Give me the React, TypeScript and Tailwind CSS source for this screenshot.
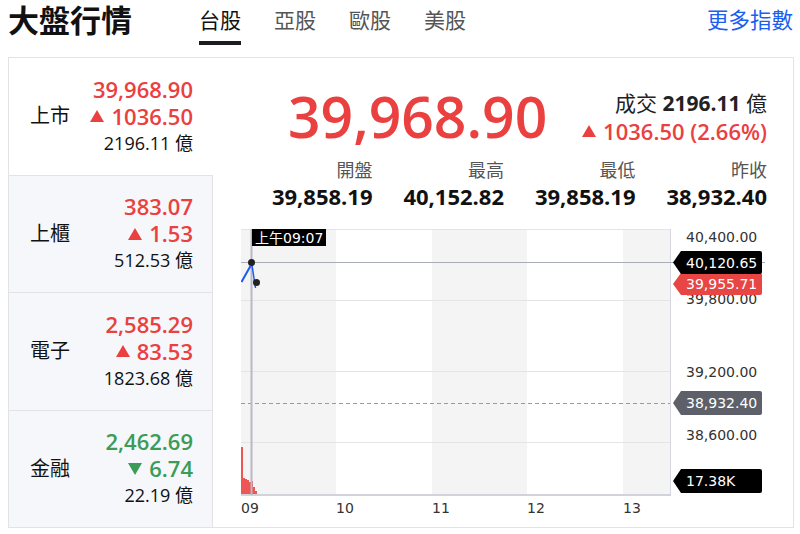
import React from "react"

const FONT = "'Open Sans', 'Noto Sans CJK TC', sans-serif"
const CHART_FONT = "'DejaVu Sans', 'Noto Sans CJK TC', sans-serif"

const rows = [
    { name: "上市", price: "39,968.90", chg: "1036.50", vol: "2196.11", up: true, active: true },
    { name: "上櫃", price: "383.07", chg: "1.53", vol: "512.53", up: true },
    { name: "電子", price: "2,585.29", chg: "83.53", vol: "1823.68", up: true },
    { name: "金融", price: "2,462.69", chg: "6.74", vol: "22.19", up: false },
]

const stats = [
    { label: "開盤", value: "39,858.19" },
    { label: "最高", value: "40,152.82" },
    { label: "最低", value: "39,858.19" },
    { label: "昨收", value: "38,932.40" },
]

const Tri = ({ up }: { up: boolean }) => (
    <svg width="14" height="12" viewBox="0 0 14 12" className="mr-[7px]">
        {up ? <path d="M7 0L14 12H0Z" fill="#eb4040" /> : <path d="M0 0H14L7 12Z" fill="#3b9b57" />}
    </svg>
)

const tag = (t: number, b: number) => {
    const cy = (t + b) / 2
    return `M673 ${cy}L681 ${t}H760Q762 ${t} 762 ${t + 2}V${b - 2}Q762 ${b} 760 ${b}H681Z`
}

const bars = [
    [241, 447], [243, 478], [245, 479], [247, 480], [249, 482], [251, 481], [253, 487], [255, 491],
]

const Chart = () => (
    <svg width="526" height="300" className="mt-[13px]" style={{ fontFamily: CHART_FONT }}>
        <g transform="translate(-241,-222)">
            <rect x="241" y="229" width="95" height="266" fill="#f4f4f4" />
            <rect x="432" y="229" width="95" height="266" fill="#f4f4f4" />
            <rect x="623" y="229" width="47" height="266" fill="#f4f4f4" />
            {[229.5, 300.5, 371.5, 442.5].map((y) => (
                <line key={y} x1="241" x2="670" y1={y} y2={y} stroke="#e4e4e4" />
            ))}
            <line x1="670.5" x2="670.5" y1="229" y2="495" stroke="#d5d8de" />
            <line x1="241" x2="670" y1="403.5" y2="403.5" stroke="#9a9a9a" strokeDasharray="4 3" />
            {bars.map(([x, y]) => (
                <rect key={x} x={x} y={y} width="2" height={495 - y} fill="#ee5555" />
            ))}
            <line x1="241" x2="671" y1="495" y2="495" stroke="#d0d3da" strokeWidth="2" />
            <line x1="251.5" x2="251.5" y1="229" y2="495" stroke="#b6bac4" strokeWidth="2" />
            <line x1="241" x2="765" y1="262.5" y2="262.5" stroke="#a9adb8" />
            <path d="M241.5 282L250.5 266" stroke="#1b5cf0" strokeWidth="2" fill="none" />
            <path d="M251.5 262L255.5 288" stroke="#1b5cf0" strokeWidth="1.5" fill="none" />
            <circle cx="251.5" cy="262.5" r="3.5" fill="#222" />
            <circle cx="256.5" cy="282.5" r="3.5" fill="#222" />
            <rect x="252" y="229" width="74" height="17" fill="#000" />
            <text x="255" y="238" fill="#fff" fontSize="14" dominantBaseline="central">上午09:07</text>

            {[
                ["40,400.00", 237],
                ["39,800.00", 299],
                ["39,200.00", 372],
                ["38,600.00", 435],
            ].map(([t, y]) => (
                <text key={t} x="686" y={y} fill="#333" fontSize="14" dominantBaseline="central">{t}</text>
            ))}

            <path d={tag(273, 295)} fill="#e84545" />
            <text x="686" y="284" fill="#fff" fontSize="14" dominantBaseline="central">39,955.71</text>
            <path d={tag(251, 274)} fill="#000" />
            <text x="686" y="262.5" fill="#fff" fontSize="14" dominantBaseline="central">40,120.65</text>
            <path d={tag(391, 415)} fill="#5d6068" />
            <text x="686" y="403" fill="#fff" fontSize="14" dominantBaseline="central">38,932.40</text>
            <path d={tag(469, 493)} fill="#000" />
            <text x="686" y="481" fill="#fff" fontSize="14" dominantBaseline="central">17.38K</text>

            {[
                ["09", 241],
                ["10", 336],
                ["11", 432],
                ["12", 527],
                ["13", 623],
            ].map(([t, x]) => (
                <text key={t} x={x} y="508" fill="#333" fontSize="14" dominantBaseline="central">{t}</text>
            ))}
        </g>
    </svg>
)

export default function App() {
    return (
        <div className="w-[800px] h-[534px] bg-white text-[#111] overflow-hidden" style={{ fontFamily: FONT }}>
            <header className="h-[57px] flex items-start pl-[8px] pr-[7px]">
                <h1 className="shrink-0 text-[31px] font-bold leading-[40px]">大盤行情</h1>
                <nav className="flex gap-[33px] ml-[67px]">
                    <div className="flex flex-col">
                        <span className="text-[21px] leading-[40px] text-[#111]">台股</span>
                        <span className="mt-[1px] h-[4px] bg-[#1b1c1f]" />
                    </div>
                    <span className="text-[21px] leading-[40px] text-[#555]">亞股</span>
                    <span className="text-[21px] leading-[40px] text-[#555]">歐股</span>
                    <span className="text-[21px] leading-[40px] text-[#555]">美股</span>
                </nav>
                <a className="ml-auto text-[21.5px] leading-[40px] text-[#1b5ef0]">更多指數</a>
            </header>

            <div className="ml-[8px] w-[786px] h-[471px] border border-[#e3e3e3] flex">
                <aside className="w-[204px] flex flex-col">
                    {rows.map((r) => (
                        <div
                            key={r.name}
                            className={
                                r.active
                                    ? "flex-1 flex items-center justify-between pl-[21px] pr-[20px] bg-white"
                                    : "flex-1 flex items-center justify-between pl-[21px] pr-[19px] bg-[#f5f7fa] border-t border-r border-[#e3e3e3]"
                            }
                        >
                            <span className="text-[20px]">{r.name}</span>
                            <div className="flex flex-col items-end">
                                <span className={"text-[22px] font-semibold leading-[27px] " + (r.up ? "text-[#eb4040]" : "text-[#3b9b57]")}>{r.price}</span>
                                <span className={"flex items-center text-[22px] font-semibold leading-[27px] " + (r.up ? "text-[#eb4040]" : "text-[#3b9b57]")}>
                                    <Tri up={r.up} />
                                    {r.chg}
                                </span>
                                <span className="text-[18px] leading-[27px]">{r.vol} 億</span>
                            </div>
                        </div>
                    ))}
                </aside>

                <main className="flex-1 flex flex-col pl-[28px] pr-[26px]">
                    <div className="h-[99px] pt-[18px] flex items-center">
                        <span className="ml-[47px] text-[57px] font-semibold text-[#eb4040] leading-none">39,968.90</span>
                        <div className="ml-auto flex flex-col items-end">
                            <span className="text-[21px] leading-[28px] text-[#222]">
                                成交 <span className="font-bold">2196.11</span> 億
                            </span>
                            <span className="flex items-center text-[22px] leading-[28px] font-semibold text-[#eb4040]">
                                <Tri up />
                                1036.50 (2.66%)
                            </span>
                        </div>
                    </div>
                    <div className="grid grid-cols-4 text-right">
                        {stats.map((s) => (
                            <div key={s.label} className="flex flex-col">
                                <span className="text-[18px] leading-[26px] text-[#555]">{s.label}</span>
                                <span className="text-[22px] leading-[26px] font-bold">{s.value}</span>
                            </div>
                        ))}
                    </div>
                    <Chart />
                </main>
            </div>
        </div>
    )
}
